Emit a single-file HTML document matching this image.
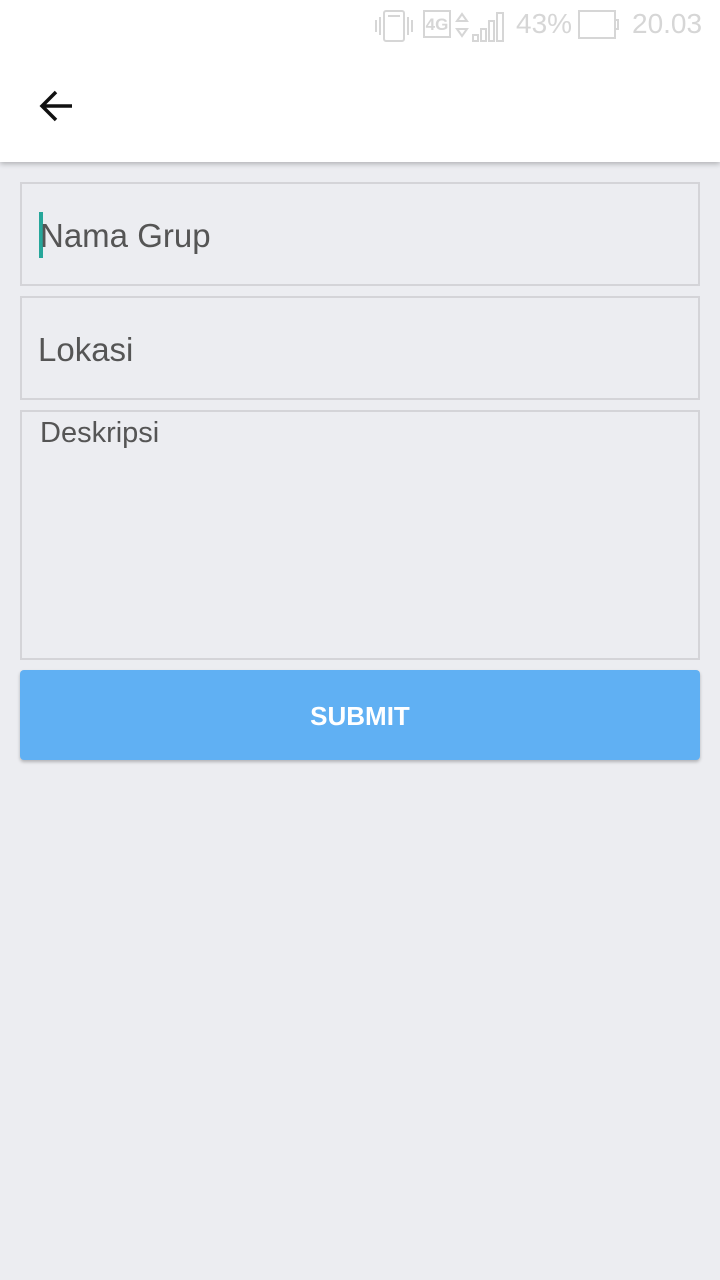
<!DOCTYPE html>
<html><head><meta charset="utf-8"><style>
body{margin:0;width:720px;height:1280px;background:#ecedf1;font-family:"Liberation Sans",sans-serif;position:relative;overflow:hidden}
.hdr{position:absolute;left:0;top:0;width:720px;height:162px;background:#fff;box-shadow:0 2px 5px rgba(0,0,0,.25)}
.sb{position:absolute;top:8px;color:#d6d6d6;font-size:28px;}
.box{position:absolute;left:20px;width:676px;border:2px solid #d4d4d8;color:#555;box-sizing:content-box}
.btn{position:absolute;left:20px;top:670px;width:680px;height:90px;background:#60b0f3;border-radius:4px;box-shadow:0 2px 3px rgba(0,0,0,.25);color:#fff;font-size:26px;font-weight:bold;text-align:center;line-height:92px}
</style></head><body>
<div class="hdr">
<svg style="position:absolute;left:374px;top:8px" width="40" height="36" viewBox="0 0 40 36" fill="none" stroke="#d6d6d6" stroke-width="2"><rect x="10" y="3" width="20" height="30" rx="2"/><line x1="2" y1="12" x2="2" y2="24"/><line x1="6" y1="9" x2="6" y2="27"/><line x1="34" y1="9" x2="34" y2="27"/><line x1="38" y1="12" x2="38" y2="24"/><line x1="14" y1="8" x2="26" y2="8"/></svg>
<div style="position:absolute;left:423px;top:10px;width:28px;height:28px;border:2px solid #d6d6d6;box-sizing:border-box;color:#d6d6d6;font-weight:bold;font-size:17px;line-height:25px;text-align:center">4G</div>
<svg style="position:absolute;left:455px;top:10px" width="55" height="32" viewBox="0 0 55 32" fill="none" stroke="#d6d6d6" stroke-width="2"><path d="M2 11 L7 4 L12 11Z M2 19 L7 26 L12 19Z"/><rect x="18" y="25" width="5" height="6"/><rect x="26" y="19" width="5" height="12"/><rect x="34" y="11" width="5" height="20"/><rect x="42" y="3" width="6" height="28"/></svg>
<div class="sb" style="left:516px">43%</div>
<svg style="position:absolute;left:578px;top:10px" width="42" height="30" viewBox="0 0 42 30" fill="none" stroke="#d6d6d6" stroke-width="2"><rect x="1" y="1" width="36" height="27"/><rect x="37" y="10" width="3" height="9"/></svg>
<div class="sb" style="left:632px">20.03</div>
<svg style="position:absolute;left:38px;top:88px" width="36" height="36" viewBox="0 0 36 36" fill="none" stroke="#111" stroke-width="3.5"><path d="M34 18H4M18 4L4 18L18 32"/></svg>
</div>
<div class="box" style="top:182px;height:100px"><div style="position:absolute;left:17px;top:28px;width:4px;height:46px;background:#26a69a"></div><span style="position:absolute;left:18px;top:33px;font-size:33px">Nama Grup</span></div>
<div class="box" style="top:296px;height:100px"><span style="position:absolute;left:16px;top:33px;font-size:33px">Lokasi</span></div>
<div class="box" style="top:410px;height:246px"><span style="position:absolute;left:18px;top:5px;font-size:29px">Deskripsi</span></div>
<div class="btn">SUBMIT</div>
</body></html>
